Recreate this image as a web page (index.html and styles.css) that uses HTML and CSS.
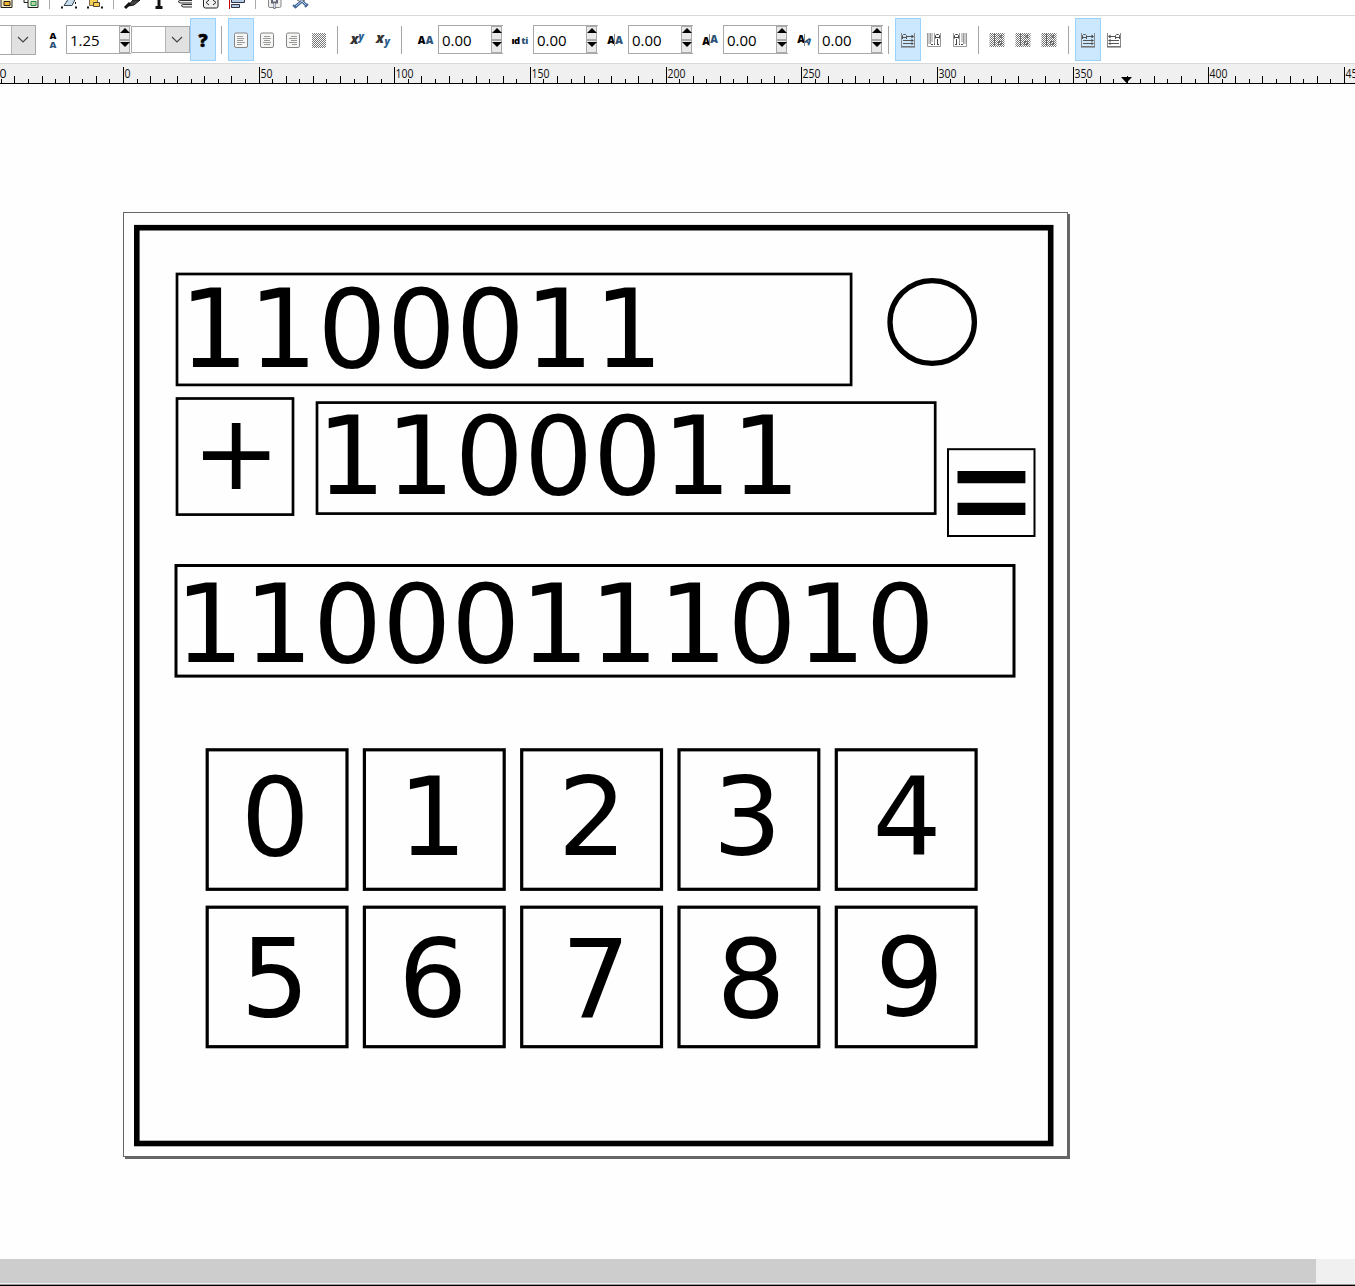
FILE: index.html
```
<!DOCTYPE html>
<html lang="en">
<head>
<meta charset="utf-8">
<title>Vector editor</title>
<link rel="stylesheet" href="styles.css">
</head>
<body>
<svg class="defs" aria-hidden="true">
  <defs>
    <pattern id="check" width="2" height="2" patternUnits="userSpaceOnUse"><path fill="#777" d="M0 0h1v1H0zM1 1h1v1H1z"/></pattern>
    <symbol id="lines" viewBox="0 0 16 16"><rect x="1.5" y="1" width="13" height="14.5" rx="1.5" fill="#f6f6f4" stroke="#858585"/></symbol>
    <symbol id="orient" viewBox="0 0 16 16"><path d="M1.500 1v13.500M14.500 1v13.500" fill="none" stroke="#888"/><path d="M1 14.800h14" stroke="#777" stroke-width="1.600"/><path d="M2.500 7V3.500l1-1h2l1 1V7M2.500 5.500h4M7 4.500h6M3 8.500h10M3 11.500h10" fill="none" stroke="#555"/><path d="M11.500 2.500l2.500 2-2.500 2zM11.500 7l2.500 1.500-2.500 1.500zM11.500 10.200l2.500 1.300-2.500 1.500z" fill="#444"/></symbol>
    <symbol id="columns" viewBox="0 0 16 16"><path d="M2 1h2v11H2zM5 1h2v9H5z" fill="#ccc"/><path d="M1.500 1v13.500h13V1M4.500 1v11M8.500 1v11" fill="none" stroke="#999"/><path d="M9.500 6.500V3.500l1-1h2l1 1v3M9.500 5.500h4M11.500 7v5M5 12.500h2M8 12.500h1M11 12.500h2" fill="none" stroke="#444"/></symbol>
    <symbol id="glyphs" viewBox="0 0 16 16"><rect x="0.500" y="1" width="15" height="14" fill="url(#check)"/><path d="M5.500 1v13M9 3l4 3M9 6l4-3M9.500 9.500h3v3h-3z" fill="none" stroke="#666"/></symbol>
  </defs>
</svg>
<div class="commands">
  <svg width="330" height="15" viewBox="0 0 330 15" fill="none">
    <path d="M1 0v7.500h11V0" fill="#f5e9bb" stroke="#222"/><path d="M4 1.500h6v4H4z" fill="#f5b52a" stroke="#222"/>
    <path d="M24 0v2.500h4M28 0v7.500h10V0" fill="#e8f0e0" stroke="#222"/><path d="M31 1.500h5v4h-5z" fill="#b5d7a6" stroke="#284"/>
    <path d="M49.500 0v9M113.500 0v9M255.500 0v9" stroke="#aaa"/>
    <path d="M64 5.500l4-6h7l-3 6z" fill="#c9dceb" stroke="#345"/><path d="M61 7.500h2M75 7.500h2M75 3h1" stroke="#111" stroke-width="2"/>
    <path d="M89.500 0v5.500h8V0" fill="#f5cf55" stroke="#765"/><path d="M93.500 2.500h6v4h-6z" fill="#f8cf50" stroke="#543"/><path d="M87 7.500h2M101 7.500h2" stroke="#111" stroke-width="2"/>
    <path d="M128 6l5-6h7l-6 5z" fill="#444" stroke="#111"/><path d="M125 8l5-5" stroke="#111" stroke-width="3"/>
    <path d="M159 0v7M155.500 7.500h7" stroke="#111" stroke-width="3"/>
    <path d="M192 .5h-12l-2 1 2 1.500h12M192 4.500h-9l-2 1 2 1.500h9" fill="#eee" stroke="#333"/>
    <path d="M203.500 0v6q0 2 2 2h11q1.500 0 1.500-2V0" fill="#f2f2f2" stroke="#222"/><path d="M209 0l-3 2.500 3 2.500M213 0l3 2.500-3 2.500" stroke="#222"/>
    <path d="M229.500 0v9" stroke="#c00"/><path d="M231.500 -1.500h13v4h-13zM231.500 4.500h8v3h-8z" fill="#b3cae4" stroke="#334"/>
    <path d="M268.500 0v6q0 1.500 1.500 1.500h9.500q1.500 0 1.500-1.500V0" fill="#eee" stroke="#888"/><path d="M272 0v2.500h5V0M274.500 3v6" stroke="#667" stroke-width="2"/><path d="M274.500 3v5" stroke="#cde"/>
    <path d="M295 7l7-6M302 1l5 5" stroke="#456a9b" stroke-width="3"/><path d="M293 5l3 3M305 7l3-3" stroke="#456a9b" stroke-width="2"/><path d="M297 0l4 2 4-2" stroke="#666"/><path d="M296 6l6-5 4 4" stroke="#b8cbe4"/>
  </svg>
</div>
<div class="controls">
  <div class="combo combo-font"><span class="arrow"><svg width="12" height="7"><path d="M1 1l5 5 5-5"/></svg></span></div>
  <svg class="spacing-icon" width="12" height="26" viewBox="0 0 12 26"><text x="6" y="12" class="tiny">A</text><text x="6" y="20.500" class="tiny blue">A</text></svg>
  <div class="entry"><span class="value">1.25</span><span class="spin"><i class="up"></i><i class="down"></i></span></div>
  <div class="combo combo-unit"><span class="arrow"><svg width="12" height="7"><path d="M1 1l5 5 5-5"/></svg></span></div>
  <div class="toggle on help">?</div>
  <i class="sep sep-a"></i>
  <div class="toggle on"><svg width="16" height="16"><use href="#lines"/><path d="M4 4.500h6M4 6.500h7M4 8.500h6M4 10.500h8M4 12.500h5" stroke="#999"/></svg></div>
  <div class="toggle"><svg width="16" height="16"><use href="#lines"/><path d="M5 4.500h6M4 6.500h8M5 8.500h6M4 10.500h8M5 12.500h6" stroke="#999"/></svg></div>
  <div class="toggle"><svg width="16" height="16"><use href="#lines"/><path d="M6 4.500h6M4 6.500h8M6 8.500h6M4 10.500h8M7 12.500h5" stroke="#999"/></svg></div>
  <div class="toggle"><svg width="16" height="16"><rect x="1" y="1" width="14" height="15" rx="1" fill="url(#check)"/></svg></div>
  <i class="sep sep-b"></i>
  <div class="toggle"><svg width="22" height="32"><text x="4.500" y="20" class="ital">x</text><text x="12.500" y="15.500" class="ital small blue">y</text></svg></div>
  <div class="toggle"><svg width="22" height="32"><text x="4" y="19" class="ital">x</text><text x="12.500" y="20.500" class="ital small blue">y</text></svg></div>
  <i class="sep sep-c"></i>
  <div class="metric"><svg width="20" height="24"><text x="6.500" y="16" class="glyph">A</text><text x="14.500" y="16" class="glyph blue">A</text></svg>
    <div class="entry"><span class="value">0.00</span><span class="spin"><i class="up"></i><i class="down"></i></span></div></div>
  <div class="metric"><svg width="20" height="24"><text x="5.500" y="16" class="glyph word">ıd</text><text x="14.500" y="16" class="glyph word blue">ti</text></svg>
    <div class="entry"><span class="value">0.00</span><span class="spin"><i class="up"></i><i class="down"></i></span></div></div>
  <div class="metric"><svg width="20" height="24"><text x="6" y="16" class="glyph">A</text><path d="M9.500 6v12" stroke="#888"/><text x="14" y="16" class="glyph blue">A</text></svg>
    <div class="entry"><span class="value">0.00</span><span class="spin"><i class="up"></i><i class="down"></i></span></div></div>
  <div class="metric"><svg width="20" height="24"><text x="6" y="17" class="glyph">A</text><path d="M9.500 6v12" stroke="#888"/><text x="14" y="14.500" class="glyph blue">A</text></svg>
    <div class="entry"><span class="value">0.00</span><span class="spin"><i class="up"></i><i class="down"></i></span></div></div>
  <div class="metric"><svg width="20" height="24"><text x="6" y="15" class="glyph">A</text><path d="M9.500 6v12" stroke="#888"/><text x="13.500" y="16.500" class="glyph slant blue" transform="rotate(35 13.500 13)">A</text></svg>
    <div class="entry"><span class="value">0.00</span><span class="spin"><i class="up"></i><i class="down"></i></span></div></div>
  <i class="sep sep-d"></i>
  <div class="toggle on"><svg width="16" height="16"><use href="#orient"/></svg></div>
  <div class="toggle"><svg width="16" height="16"><use href="#columns"/></svg></div>
  <div class="toggle"><svg class="flip" width="16" height="16"><use href="#columns"/></svg></div>
  <i class="sep sep-e"></i>
  <div class="toggle"><svg width="16" height="16"><use href="#glyphs"/></svg></div>
  <div class="toggle"><svg width="16" height="16"><use href="#glyphs"/></svg></div>
  <div class="toggle"><svg width="16" height="16"><use href="#glyphs"/></svg></div>
  <i class="sep sep-f"></i>
  <div class="toggle on"><svg width="16" height="16"><use href="#orient"/></svg></div>
  <div class="toggle"><svg class="flip" width="16" height="16"><use href="#orient"/></svg></div>
</div>
<svg class="ruler" id="ruler" width="1355" height="20" viewBox="0 0 1355 20">
  <path d="M0 19.500h1355" stroke="#000"/>
  <path d="M1121 13h11l-5.500 6z"/>
</svg>
<svg class="canvas" width="1355" height="1175" viewBox="0 84 1355 1175">
  <path class="shadow" d="M1068 214h2v945H125v-2h943z"/>
  <rect class="page" x="123.500" y="212.500" width="944" height="944"/>
  <rect class="frame" x="136.800" y="227.700" width="913.900" height="915.800"/>
  <g class="display">
    <rect x="177" y="274" width="674.100" height="110.900"/>
    <rect x="177" y="398.500" width="116" height="116.100"/>
    <rect x="317" y="402.600" width="618.200" height="111"/>
    <rect class="result" x="176" y="565.500" width="838" height="110.600"/>
    <rect class="equals" x="948" y="449.200" width="86.500" height="86.800"/>
  </g>
  <ellipse class="lamp" cx="932.200" cy="322" rx="42.200" ry="41.400"/>
  <path d="M957.500 471h67.900v12.200h-67.900zM957.500 502.700h67.900v12.200h-67.900z"/>
  <g class="keys">
    <rect x="207.200" y="749.800" width="139.800" height="139.500"/><rect x="364.400" y="749.800" width="139.800" height="139.500"/><rect x="521.700" y="749.800" width="139.800" height="139.500"/><rect x="679" y="749.800" width="139.800" height="139.500"/><rect x="836.300" y="749.800" width="139.800" height="139.500"/>
    <rect x="207.200" y="907.200" width="139.800" height="139.500"/><rect x="364.400" y="907.200" width="139.800" height="139.500"/><rect x="521.700" y="907.200" width="139.800" height="139.500"/><rect x="679" y="907.200" width="139.800" height="139.500"/><rect x="836.300" y="907.200" width="139.800" height="139.500"/>
  </g>
  <g class="digits">
    <text x="179.400" y="367.200">1100011</text>
    <text class="plus" x="191.800" y="489">+</text>
    <text x="316.700" y="493.700">1100011</text>
    <text x="174.900" y="662.200">11000111010</text>
    <text x="240.800" y="855.400">0</text><text x="398" y="855">1</text><text x="557.700" y="855">2</text><text x="712.700" y="854.200">3</text><text x="872.500" y="855.300">4</text>
    <text x="240.500" y="1016.200">5</text><text x="398.200" y="1016">6</text><text x="561.300" y="1017.300">7</text><text x="716.500" y="1017">8</text><text x="875" y="1015">9</text>
  </g>
</svg>
<div class="scrollbar"><div class="thumb"></div></div>
<script src="ruler.js"></script>
</body>
</html>
```
FILE: styles.css
```
body { margin: 0; width: 1355px; height: 1286px; overflow: hidden; background: #fefefe; font-family: "Open Sans", sans-serif; color: #000; }
svg { display: block; }
.defs { position: absolute; width: 0; height: 0; }
.commands { height: 15px; border-bottom: 1px solid #dadada; background: #fff; }
.controls { height: 47px; display: flex; align-items: center; border-bottom: 1px solid #dadada; background: #fff; }
.controls > * { flex: none; box-sizing: border-box; }
.combo { display: flex; justify-content: flex-end; border: 1px solid #a9a9ad; background: #fff; }
.combo-font { width: 36px; height: 30px; border-left: 0; }
.combo-unit { width: 59px; height: 27px; }
.arrow { width: 24px; display: flex; align-items: center; justify-content: center; background: #e1e1e1; border-left: 1px solid #b5b5b5; box-sizing: border-box; }
.arrow svg { margin-right: 1px; }
.arrow path { fill: none; stroke: #444; stroke-width: 1.2; }
.spacing-icon { margin: 0 7px 0 11px; }
.tiny { font: 800 9.5px "Open Sans", sans-serif; text-anchor: middle; }
.blue { fill: #2d5378; }
.entry { width: 65px; height: 29px; display: flex; align-items: center; background: #fff; border: 1px solid #a9a9a9; border-right: 0; box-sizing: border-box; font-size: 15px; line-height: 27px; }
.value { flex: 1; padding: 1px 0 0 3px; }
.spin { width: 11px; height: 27px; margin-right: 1px; display: flex; flex-direction: column; align-items: center; justify-content: space-between; border: 1px solid #a9a9a9; padding: 1px 0 5px; box-sizing: border-box; background: linear-gradient(#e9e9e9 12px, #a9a9a9 12px, #a9a9a9 14px, #e9e9e9 14px); }
.up, .down { border: 5px solid transparent; border-top-width: 0; border-bottom: 5px solid #000; }
.down { transform: scaleY(-1); }
.toggle { width: 26px; height: 43px; display: flex; align-items: center; justify-content: center; }
.on { background: #cce8ff; border: 1px solid #99d1ff; }
.help { font: 800 18px "Open Sans", sans-serif; -webkit-text-stroke: 0.6px #000; }
.sep { width: 1px; height: 28px; background: #a5a5a5; }
.sep-a { margin: 0 6px 0 5px; }
.sep-b { margin: 0 6px 0 5px; }
.sep-c { margin: 0 13px 0 5px; }
.sep-d { margin: 0 6px 0 -2px; }
.sep-e { margin: 0 5px 0 5px; }
.sep-f { margin: 0 6px 0 6px; }
.metric { width: 95px; display: flex; align-items: center; }
.metric .entry { margin-left: 3px; }
.glyph { font: 800 10.5px "Open Sans", sans-serif; text-anchor: middle; }
.word { font-size: 9.5px; letter-spacing: -0.5px; }
.slant { font-size: 9px; }
.ital { font: italic 800 14px "Open Sans", sans-serif; fill: #333; }
.ital.small { font-size: 10px; }
.ital.blue { fill: #2d6090; }
.flip { transform: scaleX(-1); }
.ruler { background: #f0f0f0; }
.ruler text { font: 12px "Open Sans", sans-serif; fill: #111; }
.canvas { background: #fefefe; }
.canvas rect, .lamp { fill: none; stroke: #000; }
.canvas .page { stroke: #666; }
.shadow { fill: #666; }
.frame { stroke-width: 5.6; }
.display { stroke-width: 2.7; }
.display .result { stroke-width: 3; }
.display .equals { stroke-width: 2; }
.lamp { stroke-width: 5.3; }
.keys { stroke-width: 3.2; }
.digits { font: 108.6px "DejaVu Sans", Verdana, sans-serif; }
.plus { font-size: 106px; }
.scrollbar { height: 24px; background: #f0f0f0; border-bottom: 1px solid #f0f0f0; box-shadow: 0 1px #999, 0 2px #000; }
.thumb { width: 1316px; height: 24px; background: #cdcdcd; }
```
FILE: ruler.js
```
const NS = "http://www.w3.org/2000/svg";
const ruler = document.getElementById("ruler");
const origin = 123.45;
const step = 13.565;
let d = "";
for (let i = -10; i <= 91; i++) {
  const x = Math.floor(origin + i * step) + 0.5;
  const top = i % 10 === 0 ? 3 : i % 2 === 0 ? 12 : 15;
  d += `M${x} ${top}V20`;
  if (i % 10 === 0) {
    const label = document.createElementNS(NS, "text");
    const text = String(i * 5);
    label.textContent = text;
    label.setAttribute("x", x + 1);
    label.setAttribute("y", 14);
    label.setAttribute("textLength", text.length * 6);
    label.setAttribute("lengthAdjust", "spacingAndGlyphs");
    ruler.append(label);
  }
}
const ticks = document.createElementNS(NS, "path");
ticks.setAttribute("d", d);
ticks.setAttribute("stroke", "#000");
ruler.append(ticks);
```
